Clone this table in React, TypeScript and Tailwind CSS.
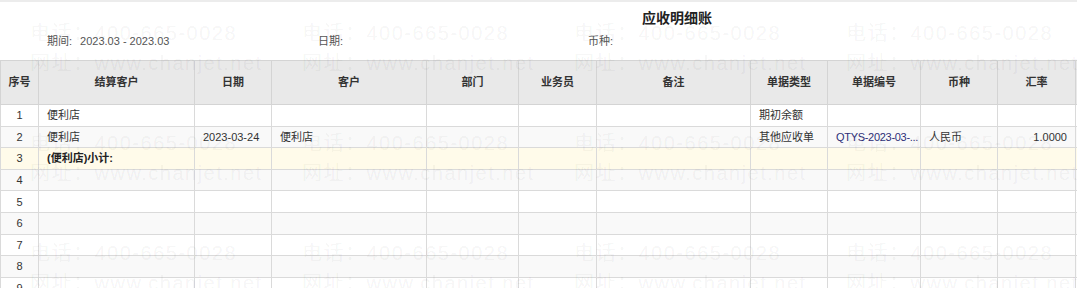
const COLS = [
  { label: "序号", w: 38 },
  { label: "结算客户", w: 156 },
  { label: "日期", w: 77 },
  { label: "客户", w: 155 },
  { label: "部门", w: 92 },
  { label: "业务员", w: 78 },
  { label: "备注", w: 154 },
  { label: "单据类型", w: 77 },
  { label: "单据编号", w: 93 },
  { label: "币种", w: 77 },
  { label: "汇率", w: 78 },
  { label: "", w: 40 },
];

type Row = { cells: string[]; subtotal?: boolean };

const ROWS: Row[] = [
  { cells: ["1", "便利店", "", "", "", "", "", "期初余额", "", "", ""] },
  { cells: ["2", "便利店", "2023-03-24", "便利店", "", "", "", "其他应收单", "QTYS-2023-03-...", "人民币", "1.0000"] },
  { cells: ["3", "(便利店)小计:", "", "", "", "", "", "", "", "", ""], subtotal: true },
  { cells: ["4"] },
  { cells: ["5"] },
  { cells: ["6"] },
  { cells: ["7"] },
  { cells: ["8"] },
  { cells: ["9"] },
];

function Watermark() {
  const tiles = Array.from({ length: 12 });
  return (
    <div className="pointer-events-none absolute inset-0 overflow-hidden">
      <div className="grid grid-cols-[repeat(4,272px)] pl-[30px] pt-[16px]">
        {tiles.map((_, i) => (
          <div key={i} className="flex h-[110px] flex-col text-[20px] leading-[30px] tracking-[1.5px] whitespace-nowrap text-black/[0.055]">
            <span>电话：400-665-0028</span>
            <span>网址：www.chanjet.net</span>
          </div>
        ))}
      </div>
    </div>
  );
}

export default function App() {
  return (
    <div
      className="relative h-[288px] w-[1077px] overflow-hidden border-t-2 border-[#ececec] bg-white text-[11px] text-[#333]"
      style={{ fontFamily: '"Liberation Sans", "Noto Sans CJK SC", sans-serif' }}
    >
      <div className="flex h-[26px] items-end justify-center pl-[277px]">
        <h1 className="text-[14px] font-bold leading-[20px] text-[#222]">应收明细账</h1>
      </div>
      <div className="flex h-[32px] items-start pl-[47px] pt-[6px] leading-[14px] text-[#555]">
        <div className="w-[271px]">
          期间:<span className="ml-2">2023.03 - 2023.03</span>
        </div>
        <div className="w-[270px]">日期:</div>
        <div>币种:</div>
      </div>

      <table className="table-fixed border-collapse" style={{ width: COLS.reduce((s, c) => s + c.w, 0) }}>
        <colgroup>
          {COLS.map((c, i) => (
            <col key={i} style={{ width: c.w }} />
          ))}
        </colgroup>
        <thead>
          <tr className="h-[44px] bg-[#e9e9e9]">
            {COLS.map((c, i) => (
              <th key={i} className="border border-[#d4d4d4] font-bold text-[#333]">
                {c.label}
              </th>
            ))}
          </tr>
        </thead>
        <tbody>
          {ROWS.map((r, ri) => (
            <tr
              key={ri}
              className={`h-[21.6px] ${r.subtotal ? "bg-[#fffbea]" : ri % 2 === 1 ? "bg-[#f9f9f9]" : "bg-white"}`}
            >
              {COLS.map((_, ci) => {
                const v = r.cells[ci] ?? "";
                return (
                  <td
                    key={ci}
                    className={`overflow-hidden whitespace-nowrap border border-[#dadada] leading-[20px] ${
                      ci === 0 ? "px-2 text-center" : ci === 10 ? "px-2 text-right" : ci === 8 ? "pl-2 pr-0 tracking-[-0.3px] text-[#2e2f78]" : "px-2 text-left"
                    } ${r.subtotal && ci === 1 ? "font-bold text-[#222]" : ""}`}
                  >
                    {v}
                  </td>
                );
              })}
            </tr>
          ))}
        </tbody>
      </table>

      <Watermark />
    </div>
  );
}
